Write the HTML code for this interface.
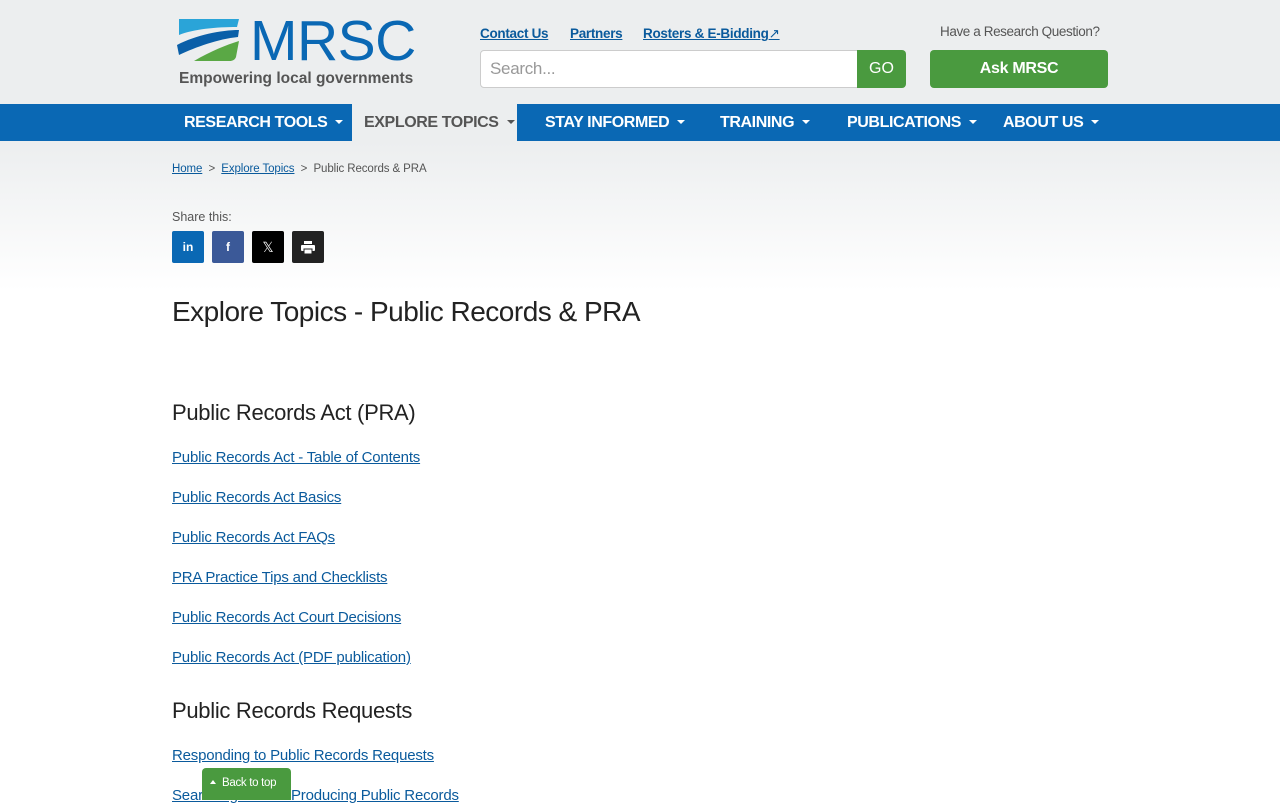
<!DOCTYPE html>
<html><head><meta charset="utf-8"><style>
*{box-sizing:border-box;margin:0;padding:0}
body{width:1280px;height:800px;overflow:hidden;font-family:"Liberation Sans",sans-serif;background:#fff;color:#222;position:relative}
.hdr{height:104px;background:#eceeef;position:relative}
.nav{height:37px;background:#0a68b4;position:relative}
.nav span{position:absolute;top:0;height:37px;line-height:37px;color:#fff;font-weight:bold;font-size:16px;letter-spacing:-0.4px;white-space:nowrap}
.nav span:after{content:"";display:inline-block;border-left:4px solid transparent;border-right:4px solid transparent;border-top:4px solid currentColor;margin-left:8px;vertical-align:3px}
.nav .act{background:#eceeef;color:#555;padding:0 12px}
.grad{position:absolute;top:141px;left:0;width:1280px;height:150px;background:linear-gradient(#eceeef,#fff)}
a{color:#0a5a9c;text-decoration:underline}
.tl{position:absolute;top:26px;font-size:13.5px;font-weight:bold;letter-spacing:-0.3px}
.links a{position:absolute;left:172px;font-size:15px;letter-spacing:-0.2px}
h2{position:absolute;left:172px;font-weight:normal;font-size:22px;color:#222;letter-spacing:-0.3px}
.sb{position:absolute;top:231px;width:32px;height:32px;border-radius:2px;color:#fff;font-size:12px;font-weight:bold;text-align:center;line-height:32px}
</style></head><body>
<div class="hdr">
<svg style="position:absolute;left:176px;top:17px" width="66" height="45" viewBox="0 0 66 45">
<path d="M3 2 L63 2 L61 10 C40 10 18 12 3 18 Z" fill="#2aa4d8"/>
<path d="M1 28 C20 18 45 13 63 13 L62 20 C42 22 20 30 3 38 Z" fill="#0a5fa8"/>
<path d="M18 44 C35 34 50 28 63 24 L60 40 C59 43 56 44 54 44 Z" fill="#5aa845"/>
</svg>
<div style="position:absolute;left:250px;top:9px;font-size:57px;color:#0a68b4;letter-spacing:-0.5px;line-height:64px">MRSC</div>
<div style="position:absolute;left:179px;top:70px;font-size:15.5px;color:#555;font-weight:bold">Empowering local governments</div>
<a class="tl" style="left:480px">Contact Us</a>
<a class="tl" style="left:570px">Partners</a>
<a class="tl" style="left:643px">Rosters &amp; E-Bidding<span style="font-weight:normal">&#8599;</span></a>
<div style="position:absolute;left:480px;top:50px;width:378px;height:38px;background:#fff;border:1px solid #ccc;border-radius:4px 0 0 4px;font-size:17px;color:#999;padding:8px 9px;letter-spacing:-0.3px">Search...</div>
<div style="position:absolute;left:857px;top:50px;width:49px;height:38px;background:#4a9a3f;border-radius:0 4px 4px 0;color:#fff;font-size:16px;text-align:center;line-height:38px">GO</div>
<div style="position:absolute;left:940px;top:24px;font-size:13.5px;color:#555;letter-spacing:-0.4px">Have a Research Question?</div>
<div style="position:absolute;left:930px;top:50px;width:178px;height:38px;background:#4a9a3f;border-radius:4px;color:#fff;font-size:16px;font-weight:bold;text-align:center;line-height:38px;letter-spacing:-0.3px">Ask MRSC</div>
</div>
<div class="nav">
<span style="left:184px">RESEARCH TOOLS</span>
<span class="act" style="left:352px;width:165px">EXPLORE TOPICS</span>
<span style="left:545px">STAY INFORMED</span>
<span style="left:720px">TRAINING</span>
<span style="left:847px">PUBLICATIONS</span>
<span style="left:1003px">ABOUT US</span>
</div>
<div class="grad"></div>
<div style="position:absolute;left:172px;top:163px;font-size:11.5px;color:#555;letter-spacing:-0.1px"><a>Home</a> &nbsp;&gt;&nbsp; <a>Explore Topics</a> &nbsp;&gt;&nbsp; Public Records &amp; PRA</div>
<div style="position:absolute;left:172px;top:210px;font-size:12.5px;color:#555">Share this:</div>
<div class="sb" style="left:172px;background:#0a68b4">in</div>
<div class="sb" style="left:212px;background:#3b5998">f</div>
<div class="sb" style="left:252px;background:#000;font-weight:normal;font-size:14px">𝕏</div>
<div class="sb" style="left:292px;background:#222"><svg width="14" height="13" viewBox="0 0 14 13" style="margin-top:10px"><rect x="3" y="0" width="8" height="3" fill="#fff"/><rect x="0" y="4" width="14" height="6" rx="1" fill="#fff"/><rect x="3" y="8" width="8" height="5" fill="#fff" stroke="#222" stroke-width="1"/></svg></div>
<h2 style="top:296px;font-size:28px;letter-spacing:-0.5px">Explore Topics - Public Records &amp; PRA</h2>
<h2 style="top:400px">Public Records Act (PRA)</h2>
<div class="links">
<a style="top:449px">Public Records Act - Table of Contents</a>
<a style="top:489px">Public Records Act Basics</a>
<a style="top:529px">Public Records Act FAQs</a>
<a style="top:569px">PRA Practice Tips and Checklists</a>
<a style="top:609px">Public Records Act Court Decisions</a>
<a style="top:649px">Public Records Act (PDF publication)</a>
<a style="top:747px">Responding to Public Records Requests</a>
<a style="top:787px">Searching for and Producing Public Records</a>
</div>
<h2 style="top:698px">Public Records Requests</h2>
<div style="position:absolute;left:202px;top:768px;width:89px;height:32px;background:#4a9a3f;border-radius:4px 4px 0 0;color:#fff;font-size:11.5px;padding-top:9px;padding-left:8px;letter-spacing:-0.3px;white-space:nowrap"><span style="display:inline-block;border-left:3.5px solid transparent;border-right:3.5px solid transparent;border-bottom:4px solid #fff;vertical-align:2px;margin-right:6px"></span>Back to top</div>
</body></html>
